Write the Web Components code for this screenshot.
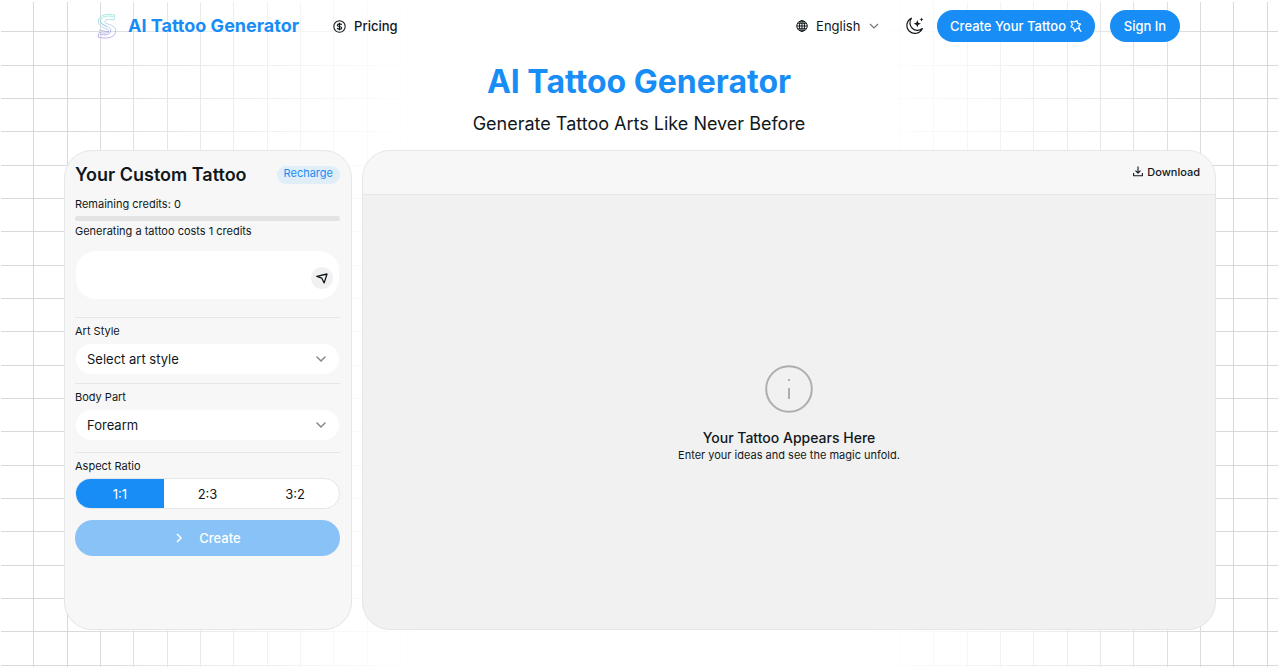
<!DOCTYPE html>
<html lang="en">
<head>
<meta charset="utf-8">
<meta name="viewport" content="width=device-width, initial-scale=1">
<title>AI Tattoo Generator</title>
<style>
  body { margin: 0; background: #fff; color: #11181c; font-family: Inter, sans-serif; font-size: 13px; line-height: 20px; }
</style>
</head>
<body>
<tattoo-app></tattoo-app>

<script>
const define = (name, html, setup) => customElements.define(name, class extends HTMLElement {
  constructor() {
    super();
    this.attachShadow({ mode: 'open' }).innerHTML = html;
    if (setup) setup.call(this, this.shadowRoot);
  }
});

/* Pill-shaped action button */
define('pill-button', `
<style>
  :host { display: block; }
  button { display: flex; align-items: center; justify-content: center; gap: 4px; width: 100%; min-width: 70px; height: 32px; padding: 0 13px;
    border: 0; border-radius: 16px; background: #188df5; color: #fff; font: 500 13px/20px Inter, sans-serif; cursor: pointer; white-space: nowrap; }
</style>
<button type="button"><slot></slot></button>`);

/* Language drop-down */
define('language-picker', `
<style>
  :host { display: block; }
  label { display: flex; align-items: center; gap: 8px; }
  .box { display: grid; align-items: center; }
  .box > * { grid-area: 1 / 1; }
  select { appearance: none; width: 63px; padding: 0; border: 0; background: none; color: #11181c; font: 400 13px/20px Inter, sans-serif; }
  .box svg { justify-self: end; pointer-events: none; }
</style>
<label aria-label="Language">
  <svg width="12" height="12" viewBox="0 0 24 24" fill="none" stroke="#11181c" stroke-width="2"><circle cx="12" cy="12" r="10.5"/><ellipse cx="12" cy="12" rx="5" ry="10.5"/><path d="M12 1.500v21M1.500 12h21M3.500 6.500h17M3.500 17.500h17"/></svg>
  <span class="box">
    <select><option>English</option></select>
    <svg width="10" height="10" viewBox="0 0 10 10" fill="none" stroke="#777" stroke-width="1.200"><path d="M1 3l4 4 4-4"/></svg>
  </span>
</label>`);

define('site-header', `
<style>
  :host { display: block; }
  header { display: flex; align-items: center; height: 52px; padding: 0 98px 0 97px; }
  a { display: flex; align-items: center; color: inherit; text-decoration: none; }
  .brand { gap: 11px; color: #188df5; font-size: 18px; line-height: 24px; font-weight: 700; }
  .pricing { gap: 8px; margin-left: 34px; font-weight: 500; }
  .actions { display: flex; align-items: center; margin-left: auto; }
  .theme { display: flex; margin: 0 13px 0 26px; padding: 0; border: 0; background: none; }
  .sign { margin-left: 15px; }
</style>
<header>
  <a class="brand" href="#">
    <svg width="20" height="26" viewBox="0 0 20 26" fill="none" stroke="url(#ink)" stroke-width=".7" stroke-linejoin="round"><defs><linearGradient id="ink" x1="0" y1="0" x2="0" y2="1"><stop offset="0" stop-color="#7ee2d6"/><stop offset=".55" stop-color="#9cc3ea"/><stop offset="1" stop-color="#a58ade"/></linearGradient></defs><path d="M17.500 2C12 .500 3 1 1.500 7c-1 5 2.500 7 7 8.500 2.500 1 3.500 1.500 3 3-.8 2-5 1.800-9.500 1L1 24c6 1.800 16 1.800 17.500-4.500 1-5-2.500-7-7.500-8.500-2.500-.8-3.500-1.700-3-3 .8-1.800 5-1.600 9-1z"/><path d="M16 3.500c-5-1-11-.5-12.500 3.800C3 11 6 12 9.500 13.300c3 1.200 5 2.700 4 5.700-1.200 3-6 3.200-10.500 2.500M2 17l10 2M3 9l7 5"/></svg>
    AI Tattoo Generator
  </a>
  <a class="pricing" href="#pricing">
    <svg width="13" height="13" viewBox="0 0 24 24" fill="none" stroke="#11181c" stroke-width="2"><circle cx="12" cy="12" r="10.500"/><path stroke-width="2.200" d="M16 9c-.5-1.500-2-2-4-2s-4 .7-4 2.500 2 2.300 4 2.500 4 .8 4 2.600-2 2.500-4 2.500-3.700-.7-4.200-2.300M12 5v14"/></svg>
    Pricing
  </a>
  <div class="actions">
    <language-picker></language-picker>
    <button class="theme" type="button" aria-label="Dark mode">
      <svg width="19" height="18" viewBox="0 0 19 18" fill="none" stroke="#11181c" stroke-width="1.200" stroke-linejoin="round"><path d="M6.500 1.200a8 8 0 1 0 10.800 10.300A7.500 7.500 0 0 1 6.500 1.200z"/><path stroke="none" fill="#11181c" d="M12.300 3l1 2.700 2.700 1-2.700 1-1 2.800-1-2.800-2.700-1 2.700-1zM16.500.5l.6 1.400 1.400.6-1.400.6-.6 1.400-.6-1.400-1.400-.6 1.400-.6z"/></svg>
    </button>
    <pill-button>Create Your Tattoo
      <svg width="12" height="12" viewBox="0 0 12 12" fill="none" stroke="#fff" stroke-width="1.200" stroke-linejoin="round" stroke-linecap="round"><path d="M1 1.300l3 .7L7 .7l.6 2.700 3 .8-1.900 2 .8 2.500-2.700-.3L4.600 11l-1-3L1 6.700l1.500-2.200zM9.500 9.500l1.500 1.800"/></svg>
    </pill-button>
    <pill-button class="sign">Sign In</pill-button>
  </div>
</header>`);

define('page-hero', `
<style>
  :host { display: block; text-align: center; }
  h1 { margin: 0; color: #188df5; font-size: 32px; line-height: 40px; font-weight: 700; }
  p { margin: 10px 0 0; font-size: 18px; line-height: 24px; }
</style>
<h1><slot name="title"></slot></h1>
<p><slot></slot></p>`);

/* Labelled drop-down; attributes: label, value */
define('select-field', `
<style>
  :host { display: block; padding-top: 5px; border-top: 1px solid #e4e6e8; }
  label { display: block; font-size: 11px; line-height: 16px; }
  .box { display: grid; align-items: center; margin: 5px 1px 0; }
  .box > * { grid-area: 1 / 1; }
  select { appearance: none; width: 100%; height: 30px; padding: 0 11px; border: 0; border-radius: 15px; background: #fff; color: #11181c; font: 400 13px/20px Inter, sans-serif; }
  svg { justify-self: end; margin-right: 13px; pointer-events: none; }
</style>
<label for="s"></label>
<div class="box">
  <select id="s"><option></option></select>
  <svg width="10" height="10" viewBox="0 0 10 10" fill="none" stroke="#858789" stroke-width="1.500" stroke-linecap="round"><path d="M1 3l4 4 4-4"/></svg>
</div>`, function (root) {
  root.querySelector('label').textContent = this.getAttribute('label');
  root.querySelector('option').textContent = this.getAttribute('value');
});

define('ratio-field', `
<style>
  :host { display: block; padding-top: 5px; border-top: 1px solid #e4e6e8; }
  fieldset { min-width: 0; margin: 0; padding: 0; border: 0; }
  legend { padding: 0; font-size: 11px; line-height: 16px; }
  .group { display: grid; grid-template-columns: repeat(3, 1fr); height: 29px; margin-top: 4px; border: 1px solid #e4e6e8; border-radius: 16px; overflow: hidden; background: #fff; }
  label { display: grid; place-items: center; }
  label > * { grid-area: 1 / 1; }
  input { appearance: none; width: 100%; height: 100%; margin: 0; }
  input:checked { background: #188df5; }
  input:checked + span { color: #fff; }
</style>
<fieldset>
  <legend>Aspect Ratio</legend>
  <div class="group">
    <label><input type="radio" name="ratio" checked><span>1:1</span></label>
    <label><input type="radio" name="ratio"><span>2:3</span></label>
    <label><input type="radio" name="ratio"><span>3:2</span></label>
  </div>
</fieldset>`);

define('prompt-box', `
<style>
  :host { display: grid; margin: 0 1px; height: 48px; border-radius: 20px; background: #fff; overflow: hidden; }
  form { display: flex; align-items: center; padding: 0 6px 0 14px; }
  textarea { flex: 1; min-width: 0; height: 32px; padding: 0; border: 0; outline: 0; resize: none; background: none; font: 400 13px/16px Inter, sans-serif; }
  button { display: grid; place-items: center; width: 22px; height: 22px; margin-top: 6px; padding: 0; border: 0; border-radius: 50%; background: #f1f1f1; }
</style>
<form>
  <textarea aria-label="Tattoo idea"></textarea>
  <button type="button" aria-label="Send"><svg width="12" height="12" viewBox="0 0 12 12" fill="none" stroke="#11181c" stroke-width="1.300" stroke-linejoin="round"><path d="M11 2L.8 4.300l5 1.900 2.400 4.700z"/></svg></button>
</form>`);

define('settings-panel', `
<style>
  :host { display: flex; flex-direction: column; box-sizing: border-box; padding: 12px 11px 12px 10px; border: 1px solid #e4e6e8; border-radius: 28px; background: #f7f7f7; }
  .top { display: flex; align-items: center; justify-content: space-between; }
  h2 { margin: 0; font-size: 18px; line-height: 24px; font-weight: 600; }
  a { height: 18px; padding: 0 7px; border-radius: 9px; background: #e0eef8; color: #188df5; font-size: 11px; line-height: 15px; text-decoration: none; }
  .credits { margin-top: 9px; font-size: 11px; line-height: 16px; }
  .credits label, .credits p { display: block; margin: 0; }
  progress { appearance: none; display: block; width: 100%; height: 5px; margin: 4px 0 2px; border: 0; border-radius: 3px; overflow: hidden; background: #e3e3e3; }
  progress::-webkit-progress-bar { background: #e3e3e3; }
  prompt-box { margin-top: 12px; }
  .style { margin-top: 18px; }
  .body { margin-top: 9px; }
  .ratio { margin-top: 12px; }
  button { display: flex; align-items: center; justify-content: center; gap: 15px; height: 36px; margin-top: 11px; padding: 0; border: 0; border-radius: 18px; background: #89c2f6; color: #fff; font: 500 13px/20px Inter, sans-serif; }
</style>
<div class="top"><h2>Your Custom Tattoo</h2><a href="#recharge">Recharge</a></div>
<div class="credits">
  <label for="credits">Remaining credits: 0</label>
  <progress id="credits" value="0" max="100"></progress>
  <p>Generating a tattoo costs 1 credits</p>
</div>
<prompt-box></prompt-box>
<select-field class="style" label="Art Style" value="Select art style"></select-field>
<select-field class="body" label="Body Part" value="Forearm"></select-field>
<ratio-field class="ratio"></ratio-field>
<button type="button" disabled><svg width="10" height="10" viewBox="0 0 10 10" fill="none" stroke="#fff" stroke-width="1.500"><path d="M3 1l4 4-4 4"/></svg>Create</button>`);

define('preview-panel', `
<style>
  :host { display: flex; flex-direction: column; box-sizing: border-box; border: 1px solid #e4e6e8; border-radius: 28px; overflow: hidden; background: #f1f1f1; }
  .bar { display: flex; justify-content: flex-end; align-items: center; height: 41px; padding: 0 15px 2px 0; border-bottom: 1px solid #e4e6e8; background: #f7f7f7; }
  button { display: flex; align-items: center; gap: 4px; padding: 0; border: 0; background: none; color: #11181c; font: 500 11px/16px Inter, sans-serif; }
  .empty { flex: 1; display: flex; flex-direction: column; align-items: center; justify-content: center; padding-top: 2px; text-align: center; }
  h3 { margin: 15px 0 0; font-size: 14px; line-height: 20px; font-weight: 500; }
  p { margin: 0; font-size: 11px; line-height: 14px; }
</style>
<div class="bar"><button type="button"><svg width="10" height="11" viewBox="0 0 10 11" fill="none" stroke="#11181c" stroke-width="1.100" stroke-linejoin="round"><path d="M5 .5v6.500M2.500 4.700L5 7.200l2.500-2.500M.6 7v2.700h8.800V7"/></svg>Download</button></div>
<div class="empty">
  <svg width="48" height="48" viewBox="0 0 48 48" fill="none" stroke="#aeaeae" stroke-width="2"><circle cx="24" cy="24" r="22.800"/><path d="M24 23v11M24 14v2"/></svg>
  <h3>Your Tattoo Appears Here</h3>
  <p>Enter your ideas and see the magic unfold.</p>
</div>`);

/* Faded square grid behind the whole page */
define('grid-backdrop', `
<style>
  :host { display: grid; min-height: 100vh; isolation: isolate; }
  .grid, .content { grid-area: 1 / 1; min-width: 0; }
  .grid { z-index: -1; margin: 2px 0 0 1px;
    -webkit-mask-image: linear-gradient(90deg, #000 0, #000 5%, rgba(0,0,0,.5) 17%, transparent 33%, transparent 68%, rgba(0,0,0,.5) 83%, #000 95%);
    mask-image: linear-gradient(90deg, #000 0, #000 5%, rgba(0,0,0,.5) 17%, transparent 33%, transparent 68%, rgba(0,0,0,.5) 83%, #000 95%);
    --c: #d9d9d9;
    background:
      linear-gradient(90deg, transparent 32px, var(--c) 32px 33px, transparent 33px 66px, var(--c) 66px 67px, transparent 67px 99px, var(--c) 99px) 0 0 / 100px 100px,
      linear-gradient(transparent 29px, var(--c) 29px 30px, transparent 30px 63px, var(--c) 63px 64px, transparent 64px 96px, var(--c) 96px 97px, transparent 97px) 0 0 / 100px 100px; }
</style>
<div class="grid"></div>
<div class="content"><slot></slot></div>`);

define('tattoo-app', `
<style>
  :host { display: block; }
  page-hero { margin-top: 10px; }
  main { display: grid; grid-template-columns: 288px minmax(0, 1fr); gap: 10px; min-height: 480px; margin-top: 14px; padding: 0 62px 37px 64px; }
</style>
<grid-backdrop>
  <site-header></site-header>
  <page-hero><span slot="title">AI Tattoo Generator</span>Generate Tattoo Arts Like Never Before</page-hero>
  <main>
    <settings-panel></settings-panel>
    <preview-panel></preview-panel>
  </main>
</grid-backdrop>`);
</script>
</body>
</html>
